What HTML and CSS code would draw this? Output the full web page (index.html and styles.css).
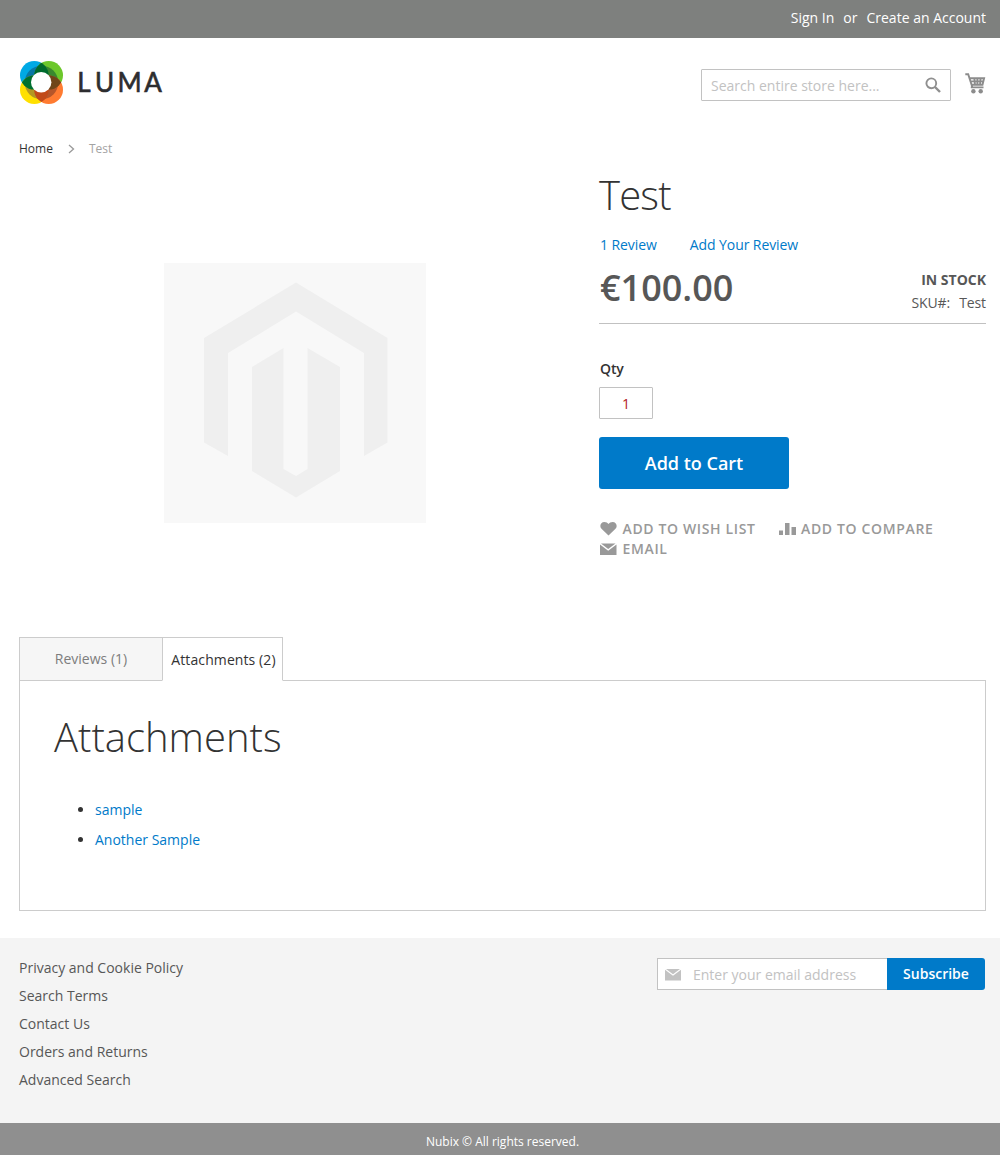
FILE: index.html
```html
<!DOCTYPE html>
<html lang="en">
<head>
<meta charset="utf-8">
<title>Test</title>
<link rel="stylesheet" href="styles.css">
</head>
<body>
<div class="topbar"><a>Sign In</a><span>or</span><a>Create an Account</a></div>
<header class="header">
  <a class="logo">
    <svg width="150" height="46" viewBox="0 0 150 46">
      <defs>
        <clipPath id="tl"><circle cx="15.3" cy="15.3" r="14.3"/></clipPath>
        <clipPath id="tr"><circle cx="29.7" cy="15.3" r="14.3"/></clipPath>
        <clipPath id="bl"><circle cx="15.3" cy="29.7" r="14.3"/></clipPath>
        <clipPath id="br"><circle cx="29.7" cy="29.7" r="14.3"/></clipPath>
      </defs>
      <circle cx="15.3" cy="15.3" r="14.3" fill="#00a9e5"/>
      <circle cx="29.7" cy="15.3" r="14.3" fill="#6cc72b"/>
      <circle cx="15.3" cy="29.7" r="14.3" fill="#ffe000"/>
      <circle cx="29.7" cy="29.7" r="14.3" fill="#ff7b31"/>
      <circle cx="22.5" cy="22.5" r="16.8" fill="#0877a5" clip-path="url(#tl)"/>
      <circle cx="22.5" cy="22.5" r="16.8" fill="#39882f" clip-path="url(#tr)"/>
      <circle cx="22.5" cy="22.5" r="16.8" fill="#b39722" clip-path="url(#bl)"/>
      <circle cx="22.5" cy="22.5" r="16.8" fill="#b5562a" clip-path="url(#br)"/>
      <g clip-path="url(#tl)"><circle cx="29.7" cy="15.3" r="14.3" fill="#006b2d"/><circle cx="15.3" cy="29.7" r="14.3" fill="#00702f"/></g>
      <g clip-path="url(#br)"><circle cx="15.3" cy="29.7" r="14.3" fill="#c14a18"/><circle cx="29.7" cy="15.3" r="14.3" fill="#704519"/></g>
      <circle cx="22.2" cy="22.2" r="10.2" fill="#fff"/>
      <text class="logo-text" x="58.2 76 98.400 125.200" y="31.700">LUMA</text>
    </svg>
  </a>
  <div class="header-tools">
    <div class="search"><span>Search entire store here...</span>
      <svg width="16" height="16" viewBox="0 0 16 16"><circle cx="6.300" cy="6.300" r="4.900" fill="none" stroke="#8f8f8f" stroke-width="1.900"/><path d="M10 10l5 5" stroke="#8f8f8f" stroke-width="2.400"/></svg>
    </div>
    <svg class="cart" width="21" height="21" viewBox="0 0 21 21"><path d="M.3 1.200h2.900l4 12.500M4.500 5.200h14.600l-1.600 6.500H7M5.800 14.400h12.700M5.300 8.400h13.200M9.300 5l.7 7M12.400 5v7M15.600 5l-.6 7" fill="none" stroke="#8c8c8c" stroke-width="1.900"/><g fill="#8c8c8c"><circle cx="8.400" cy="18.300" r="2.200"/><circle cx="15.700" cy="18.300" r="2.200"/></g></svg>
  </div>
</header>
<nav class="crumbs"><a>Home</a><svg width="7" height="10" viewBox="0 0 7 10"><path d="M1 1l4.500 4L1 9" fill="none" stroke="#999" stroke-width="1.300"/></svg><span>Test</span></nav>
<main>
  <section class="product">
    <div class="media">
      <svg width="262" height="260" viewBox="0 0 262 260"><path fill="#f8f8f8" d="M0 0h262v260H0z"/><path fill="#efefef" d="M132 19.500L223.500 75v104.500L200 193V90L132 48.500 64 90v103L40 179.500V75zM119.500 85v121l12.500 7 11.500-7V85l32.500 19v104L132 234.500 88 208V104z"/></svg>
    </div>
    <div class="info">
      <h1>Test</h1>
      <div class="reviews"><a>1 Review</a><a>Add Your Review</a></div>
      <div class="price-row">
        <div class="price">€100.00</div>
        <div class="stock"><strong>IN STOCK</strong><div class="sku"><span>SKU#:</span><span>Test</span></div></div>
      </div>
      <label class="qty-label">Qty</label>
      <div class="qty">1</div>
      <button class="add">Add to Cart</button>
      <div class="links">
        <a class="wish"><svg width="17" height="15" viewBox="0 0 17 15"><path fill="#999" d="M8.500 14.500L1.500 7.800C-1 5 .8 1 4.300 1 6.200 1 7.600 1.800 8.500 3 9.400 1.800 10.800 1 12.700 1 16.200 1 18 5 15.500 7.800z"/></svg>ADD TO WISH LIST</a>
        <a class="compare"><svg width="17" height="15" viewBox="0 0 17 15"><path fill="#999" d="M0 9.500h4V14H0zM6 2h4.500v12H6zM12.500 6H17v8h-4.500z"/></svg>ADD TO COMPARE</a>
        <a class="email"><svg width="17" height="15" viewBox="0 0 17 15"><path fill="#999" d="M1 2.500h14.500L8.200 8zM0 3.500l8.200 6.200L16.500 3.500V14H0z"/></svg>EMAIL</a>
      </div>
    </div>
  </section>
  <section class="tabs">
    <div class="tab-row"><a class="tab">Reviews (1)</a><a class="tab active">Attachments (2)</a></div>
    <div class="panel">
      <h2>Attachments</h2>
      <ul><li><a>sample</a></li><li><a>Another Sample</a></li></ul>
    </div>
  </section>
</main>
<footer class="footer">
  <div class="footer-links"><a>Privacy and Cookie Policy</a><a>Search Terms</a><a>Contact Us</a><a>Orders and Returns</a><a>Advanced Search</a></div>
  <div class="newsletter">
    <div class="field"><svg width="16" height="12" viewBox="0 0 16 12"><path fill="#c2c2c2" d="M1 0h14L8 5.200zM0 .8l8 6 8-6V11.500H0z"/></svg><span>Enter your email address</span></div>
    <button>Subscribe</button>
  </div>
</footer>
<div class="copyright">Nubix © All rights reserved.</div>
</body>
</html>
```
FILE: styles.css
```css
* { box-sizing: border-box; }
body { margin: 0; width: 1000px; background: #fff; color: #333; font: 14px/20px "Open Sans", "Noto Sans", sans-serif; }
h1, h2 { margin: 0; font-weight: 300; font-size: 40px; line-height: 44px; }
h1 { letter-spacing: -.8px; }
svg { display: block; flex: none; }
button { border: 0; background: #007ac9; color: #fff; font: 600 14px/20px "Open Sans", sans-serif; padding: 0; }

.topbar { height: 38px; background: #7e807e; color: #fff; display: flex; justify-content: flex-end; gap: 9px; padding: 8px 14px 0 0; }
.header { height: 101px; display: flex; justify-content: space-between; padding: 22px 14px 0 19px; }
.logo-text { font: 400 26px Lato, sans-serif; fill: #2d2d2f; stroke: #2d2d2f; stroke-width: .6px; }
.header-tools { display: flex; align-items: flex-start; gap: 14px; padding-top: 9px; }
.search { width: 250px; height: 32px; border: 1px solid #c2c2c2; border-radius: 1px; color: #c2c2c2; display: flex; justify-content: space-between; align-items: center; padding: 2px 9px 0; }
.search svg { margin-bottom: 2px; }
.cart { margin-top: 4px; }
.crumbs { height: 20px; display: flex; align-items: center; padding-left: 19px; font-size: 12px; color: #a3a3a3; }
.crumbs a { color: #333; }
.crumbs svg { margin: 0 14px 0 15px; }

main { padding: 0 14px 0 19px; }
.product { height: 478px; display: flex; }
.media { width: 580px; padding: 104px 0 0 145px; }
.info { width: 387px; padding-top: 14px; }
.reviews { display: flex; gap: 33px; margin-top: 18px; padding-left: 1px; letter-spacing: -.08px; }
.reviews a, .panel a { color: #007ac9; }
.price-row { display: flex; justify-content: space-between; height: 69px; border-bottom: 1px solid #c1c1c1; color: #575757; }
.price { font-size: 36px; font-weight: 600; line-height: 46px; padding: 10px 0 0 1px; }
.stock { text-align: right; padding-top: 15px; }
.stock strong { font-weight: 700; display: block; }
.sku { display: flex; justify-content: flex-end; gap: 9px; margin-top: 3px; letter-spacing: -.1px; }
.qty-label { display: block; font-weight: 600; margin: 35px 0 8px 1px; letter-spacing: -.1px; }
.qty { width: 54px; height: 32px; border: 1px solid #c2c2c2; border-radius: 1px; color: #b32020; text-align: center; line-height: 32px; }
.add { display: block; margin-top: 18px; width: 190px; height: 52px; border-radius: 3px; font-size: 18px; }
.links { display: flex; flex-wrap: wrap; column-gap: 23px; margin-top: 30px; padding-left: 1px; color: #999; font-weight: 600; letter-spacing: .64px; }
.links a { display: flex; align-items: center; gap: 5.5px; }
.links svg { margin-top: -1px; }

.tab-row { display: flex; height: 44px; margin-bottom: -1px; }
.tab { width: 144px; border: 1px solid #ccc; background: #f6f6f6; color: #7d7d7d; text-align: center; padding-top: 11px; }
.tab.active { width: 121px; margin-left: -1px; background: #fff; border-bottom-color: #fff; color: #333; padding: 12px 0 0 2px; z-index: 1; letter-spacing: .1px; }
.panel { height: 231px; border: 1px solid #ccc; padding: 34px; }
.panel ul { margin: 36px 0 0; padding-left: 41px; line-height: 30px; }

.footer { margin-top: 27px; height: 185px; background: #f4f4f4; display: flex; justify-content: space-between; align-items: flex-start; padding: 20px 15px 0 19px; }
.footer-links { display: flex; flex-direction: column; gap: 8px; color: #575757; }
.newsletter { display: flex; height: 32px; }
.field { width: 230px; border: 1px solid #c2c2c2; border-right: 0; background: #fff; color: #c2c2c2; display: flex; align-items: center; gap: 12px; padding: 2px 0 0 7px; }
.field svg { margin-bottom: 1px; }
.newsletter button { width: 98px; border-radius: 0 3px 3px 0; }
.copyright { height: 32px; background: #8f8f8f; color: #fff; font-size: 12px; line-height: 37px; text-align: center; padding-left: 5px; overflow: hidden; }
```
